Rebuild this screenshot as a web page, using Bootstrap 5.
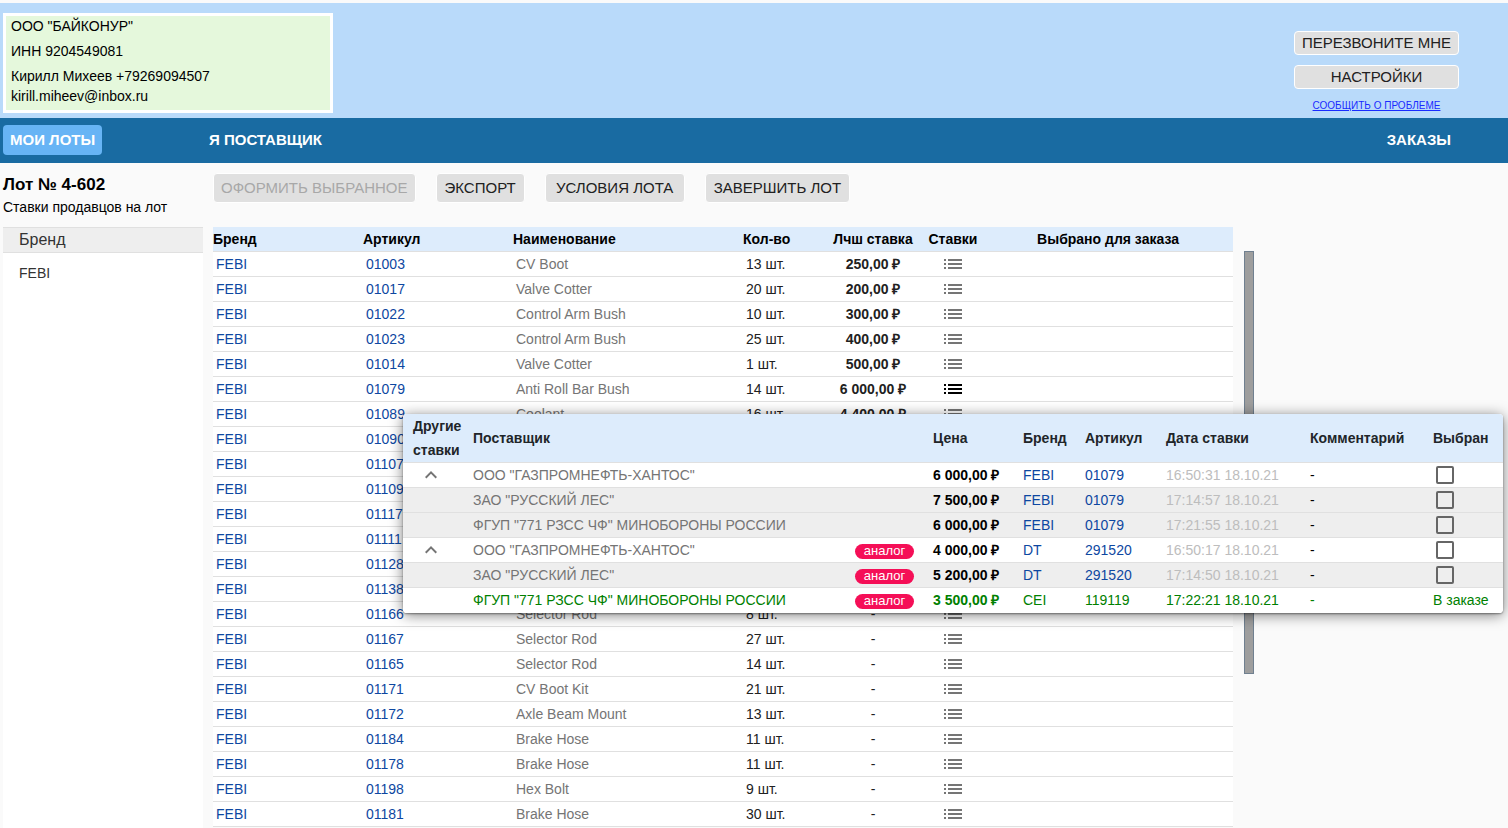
<!DOCTYPE html>
<html lang="ru">
<head>
<meta charset="utf-8">
<meta name="viewport" content="width=device-width, initial-scale=1">
<title>Лот № 4-602</title>
<link href="https://cdn.jsdelivr.net/npm/bootstrap@5.3.0/dist/css/bootstrap.min.css" rel="stylesheet">
<style>
  body {
    font-family: "Liberation Sans", Arial, sans-serif;
    font-size: 14px;
    line-height: 20px;
    color: #000;
    background: #fafafa;
  }
  .page { min-height: 100vh; padding-top: 3px; }

  .top-header { background: #b9dafa; padding: 10px 49px 5px 3px; }
  .company { width: 330px; border: 3px solid #fff; background: #e5f8dc; padding: 0 5px 4px; }
  .company p { margin: 0 0 5px; }
  .contact-box { padding-top: 18px; width: 165px; gap: 10px; }
  .report-link { font-size: 10px; line-height: 14px; color: #1a2bff; }

  .btn-grey {
    --bs-btn-padding-x: 7px;
    --bs-btn-padding-y: 4px;
    --bs-btn-font-size: 15px;
    --bs-btn-line-height: 20px;
    --bs-btn-color: #212121;
    --bs-btn-bg: #e0e0e0;
    --bs-btn-border-color: #fff;
    --bs-btn-border-radius: 4px;
    --bs-btn-hover-bg: #d5d5d5;
    --bs-btn-hover-border-color: #fff;
    --bs-btn-disabled-color: #a8a8a8;
    --bs-btn-disabled-bg: #e0e0e0;
    --bs-btn-disabled-border-color: #fff;
    --bs-btn-disabled-opacity: 1;
    white-space: nowrap;
  }
  .toolbar .btn-grey + .btn-grey { --bs-btn-padding-x: 8px; }
  .toolbar .btn-terms { min-width: 140px; }
  .contact-box .btn-grey { --bs-btn-padding-x: 4px; --bs-btn-padding-y: 1px; }

  .main-nav { background: #196ba2; padding: 7px 49px 8px 3px; }
  .main-nav .nav-link {
    color: #fff;
    font-size: 15px;
    font-weight: 700;
    line-height: 20px;
    padding: 5px 8px;
    border-radius: 4px;
  }
  .main-nav .nav-link.active { background: #67b4f5; padding: 5px 7px; }
  .nav-first { width: 198px; }

  .side { width: 200px; margin-left: 3px; }
  .lot-head { height: 64px; padding-top: 12px; }
  .lot-head h1 { font-size: 17px; line-height: 20px; font-weight: 700; margin: 0 0 2px; }
  .brand-filter { background: #fff; }
  .brand-title {
    font-size: 16px; line-height: 24px; height: 26px; padding-left: 16px; margin: 0;
    font-weight: 400; color: #333; background: #eee;
    border-top: 1px solid #e0e0e0; border-bottom: 1px solid #e0e0e0;
  }
  .brand-item { padding: 10px 16px; color: #333; }

  .lots-main { padding-left: 10px; }
  .toolbar { height: 64px; padding-top: 10px; gap: 20px; }
  .grid-width { width: 100%; max-width: 1020px; }

  .grid-table { table-layout: fixed; width: 100%; border-collapse: separate; border-spacing: 0; background: #fff; }
  .grid-table th, .grid-table td {
    height: 25px; line-height: 24px; padding: 0; white-space: nowrap;
    border-bottom: 1px solid #e0e0e0; vertical-align: middle;
  }
  .grid-table th { background: #ddecfc; }
  .grid-table a { color: #0d47a1; text-decoration: none; }
  .lots { color: #212121; }
  .lots th { color: #000; }
  .lots td { padding: 0 3px; }
  .lots td.item-name, .supplier { color: #757575; }
  .list-btn { border: 0; padding: 0; background: none; color: #757575; display: block; margin: 0 auto; line-height: 0; }
  .list-btn.current { color: #000; }

  .bar-thumb { width: 10px; height: 423px; margin: 24px 0 0 11px; background: #9e9e9e; border: 1px solid #708090; flex: none; }

  .offers { left: 190px; right: 5px; top: 187px; border-radius: 4px; overflow: hidden; box-shadow: 0 2px 14px rgba(0,0,0,.5), 0 1px 2px rgba(0,0,0,.4); background: #fff; }
  .offers .grid-table { color: #000; }
  .offers th { height: 49px; color: #212529; }
  .offers tr.ordered td { border-bottom-color: #fff; }
  .offers tr.nested td { background: #eee; }
  .offers .date { color: #bdbdbd; }
  .offers tr.ordered td, .offers tr.ordered a { color: #008000; }
  .fold-btn { border: 0; background: none; padding: 0; margin-left: 16px; display: block; line-height: 0; color: #757575; }
  .analog { display: block; width: 59px; height: 15px; margin-top: 2px; border-radius: 8px; background: #f50f57; color: #fff; font-size: 13px; line-height: 14px; text-align: center; }
  .offers .form-check-input { display: block; float: none; width: 18px; height: 18px; margin: 0 0 0 3px; border: 2px solid #666; border-radius: 2px; background-color: #fff0; }
</style>
</head>
<body>
<svg class="d-none" aria-hidden="true">
  <symbol id="icon-list" viewBox="0 0 18 10">
    <path fill="currentColor" d="M0 0h2v2H0zM0 4h2v2H0zM0 8h2v2H0zM4 0h14v2H4zM4 4h14v2H4zM4 8h14v2H4z"/>
  </symbol>
  <symbol id="icon-up" viewBox="0 0 24 24">
    <path fill="currentColor" d="M12 8l-6 6 1.41 1.41L12 10.83l4.59 4.58L18 14z"/>
  </symbol>
</svg>

<div class="page d-flex flex-column">
  <header class="top-header d-flex justify-content-between align-items-start">
    <div class="company">
      <p>ООО "БАЙКОНУР"</p>
      <p>ИНН 9204549081</p>
      <div>Кирилл Михеев +79269094507</div>
      <div>kirill.miheev@inbox.ru</div>
    </div>
    <div class="contact-box d-flex flex-column">
      <button type="button" class="btn btn-grey">ПЕРЕЗВОНИТЕ МНЕ</button>
      <button type="button" class="btn btn-grey">НАСТРОЙКИ</button>
      <a href="#" class="report-link text-center">СООБЩИТЬ О ПРОБЛЕМЕ</a>
    </div>
  </header>

  <nav class="main-nav d-flex align-items-center">
    <div class="nav-first d-flex"><a class="nav-link active" href="#">МОИ ЛОТЫ</a></div>
    <a class="nav-link" href="#">Я ПОСТАВЩИК</a>
    <a class="nav-link ms-auto" href="#">ЗАКАЗЫ</a>
  </nav>

  <div class="d-flex flex-grow-1">
    <aside class="side d-flex flex-column flex-shrink-0">
      <div class="lot-head">
        <h1>Лот № 4-602</h1>
        <div>Ставки продавцов на лот</div>
      </div>
      <section class="brand-filter flex-grow-1">
        <h2 class="brand-title">Бренд</h2>
        <div class="brand-item">FEBI</div>
      </section>
    </aside>

    <main class="lots-main flex-grow-1">
      <div class="toolbar d-flex align-items-start">
        <button type="button" class="btn btn-grey" disabled>ОФОРМИТЬ ВЫБРАННОЕ</button>
        <button type="button" class="btn btn-grey">ЭКСПОРТ</button>
        <button type="button" class="btn btn-grey btn-terms">УСЛОВИЯ ЛОТА</button>
        <button type="button" class="btn btn-grey">ЗАВЕРШИТЬ ЛОТ</button>
      </div>

      <div class="position-relative d-flex align-items-start">
        <div class="grid-width">
          <table class="grid-table lots">
            <colgroup>
              <col style="width:150px"><col style="width:150px"><col style="width:230px"><col style="width:80px"><col style="width:100px"><col style="width:60px"><col>
            </colgroup>
            <thead>
              <tr>
                <th>Бренд</th><th>Артикул</th><th>Наименование</th><th>Кол-во</th>
                <th class="text-center">Лчш ставка</th><th class="text-center">Ставки</th><th class="text-center">Выбрано для заказа</th>
              </tr>
            </thead>
            <tbody id="lot-rows"></tbody>
          </table>
        </div>
        <div class="bar-thumb"></div>

        <div class="offers position-absolute">
          <table class="grid-table">
            <colgroup>
              <col style="width:70px"><col><col style="width:78px"><col style="width:90px"><col style="width:62px"><col style="width:81px"><col style="width:144px"><col style="width:123px"><col style="width:70px">
            </colgroup>
            <thead>
              <tr>
                <th class="text-wrap" style="padding-left:10px">Другие ставки</th><th colspan="2">Поставщик</th><th>Цена</th><th>Бренд</th><th>Артикул</th><th>Дата ставки</th><th>Комментарий</th><th>Выбран</th>
              </tr>
            </thead>
            <tbody id="offer-rows"></tbody>
          </table>
        </div>
      </div>
    </main>
  </div>
</div>

<script src="https://cdn.jsdelivr.net/npm/bootstrap@5.3.0/dist/js/bootstrap.bundle.min.js"></script>
<script>
  // article, name, quantity, best price
  const lots = [
    ['01003', 'CV Boot', '13 шт.', '250,00 ₽'],
    ['01017', 'Valve Cotter', '20 шт.', '200,00 ₽'],
    ['01022', 'Control Arm Bush', '10 шт.', '300,00 ₽'],
    ['01023', 'Control Arm Bush', '25 шт.', '400,00 ₽'],
    ['01014', 'Valve Cotter', '1 шт.', '500,00 ₽'],
    ['01079', 'Anti Roll Bar Bush', '14 шт.', '6 000,00 ₽'],
    ['01089', 'Coolant', '16 шт.', '4 400,00 ₽'],
    ['01090', '', '', ''],
    ['01107', '', '', ''],
    ['01109', '', '', ''],
    ['01117', '', '', ''],
    ['01111', '', '', ''],
    ['01128', '', '', ''],
    ['01138', '', '', ''],
    ['01166', 'Selector Rod', '8 шт.', '-'],
    ['01167', 'Selector Rod', '27 шт.', '-'],
    ['01165', 'Selector Rod', '14 шт.', '-'],
    ['01171', 'CV Boot Kit', '21 шт.', '-'],
    ['01172', 'Axle Beam Mount', '13 шт.', '-'],
    ['01184', 'Brake Hose', '11 шт.', '-'],
    ['01178', 'Brake Hose', '11 шт.', '-'],
    ['01198', 'Hex Bolt', '9 шт.', '-'],
    ['01181', 'Brake Hose', '30 шт.', '-']
  ];
  document.getElementById('lot-rows').innerHTML = lots.map(([art, name, qty, price]) => `
    <tr>
      <td><a href="#">FEBI</a></td>
      <td><a href="#">${art}</a></td>
      <td class="item-name">${name}</td>
      <td>${qty}</td>
      <td class="text-center">${price === '-' ? price : `<b>${price}</b>`}</td>
      <td><button type="button" class="list-btn${art === '01079' ? ' current' : ''}" aria-label="Ставки ${art}"><svg width="18" height="10"><use href="#icon-list"/></svg></button></td>
      <td></td>
    </tr>`).join('');

  // row class, supplier, analog flag, price, brand, article, date
  const gaz = 'ООО "ГАЗПРОМНЕФТЬ-ХАНТОС"', les = 'ЗАО "РУССКИЙ ЛЕС"', fgup = 'ФГУП "771 РЗСС ЧФ" МИНОБОРОНЫ РОССИИ';
  const offers = [
    ['first', gaz, 0, '6 000,00 ₽', 'FEBI', '01079', '16:50:31 18.10.21'],
    ['nested', les, 0, '7 500,00 ₽', 'FEBI', '01079', '17:14:57 18.10.21'],
    ['nested', fgup, 0, '6 000,00 ₽', 'FEBI', '01079', '17:21:55 18.10.21'],
    ['first', gaz, 1, '4 000,00 ₽', 'DT', '291520', '16:50:17 18.10.21'],
    ['nested', les, 1, '5 200,00 ₽', 'DT', '291520', '17:14:50 18.10.21'],
    ['ordered', fgup, 1, '3 500,00 ₽', 'CEI', '119119', '17:22:21 18.10.21']
  ];
  document.getElementById('offer-rows').innerHTML = offers.map(([kind, who, analog, price, brand, art, date]) => `
    <tr class="${kind}">
      <td>${kind === 'first' ? '<button type="button" class="fold-btn" aria-label="Свернуть"><svg width="24" height="24"><use href="#icon-up"/></svg></button>' : ''}</td>
      <td class="supplier">${who}</td>
      <td>${analog ? '<span class="analog">аналог</span>' : ''}</td>
      <td><b>${price}</b></td>
      <td><a href="#">${brand}</a></td>
      <td><a href="#">${art}</a></td>
      <td class="date">${date}</td>
      <td>-</td>
      <td>${kind === 'ordered' ? 'В заказе' : `<input class="form-check-input" type="checkbox" aria-label="Выбрать ${who}">`}</td>
    </tr>`).join('');
</script>
</body>
</html>
